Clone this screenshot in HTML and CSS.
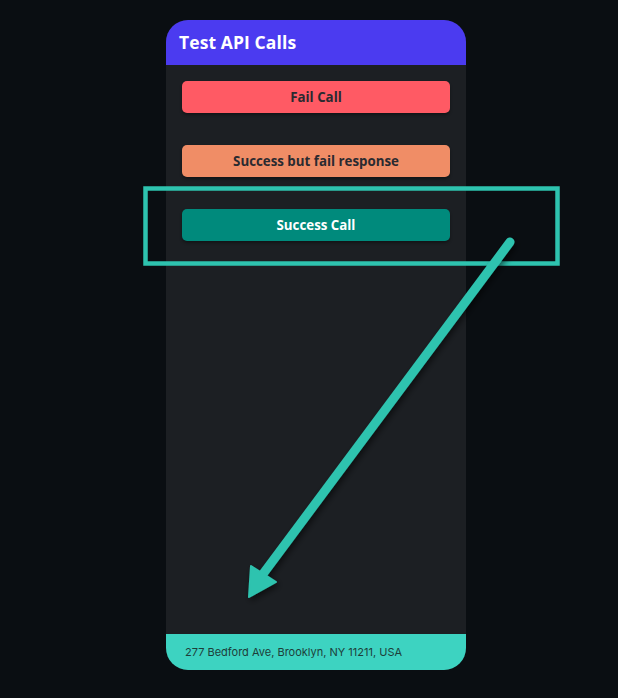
FILE: index.html
```html
<!DOCTYPE html>
<html>
<head>
<meta charset="utf-8">
<link rel="stylesheet" href="styles.css">
</head>
<body>
<div class="stage">
  <div class="phone">
    <header class="phone-header">
      <h1 class="title">Test API Calls</h1>
    </header>
    <main class="phone-body">
      <button class="btn btn-fail">Fail Call</button>
      <button class="btn btn-warn">Success but fail response</button>
      <button class="btn btn-ok">Success Call</button>
    </main>
    <footer class="phone-footer">277 Bedford Ave, Brooklyn, NY 11211, USA</footer>
  </div>
  <svg class="annotation" width="618" height="698" viewBox="0 0 618 698">
    <defs>
      <filter id="sh" x="-20%" y="-20%" width="140%" height="140%">
        <feDropShadow dx="2" dy="3" stdDeviation="3" flood-color="#000" flood-opacity="0.55"/>
      </filter>
    </defs>
    <rect x="145.5" y="188.5" width="412" height="75" fill="none" stroke="#2ec3af" stroke-width="4.5"/>
    <g filter="url(#sh)" fill="#2ec3af" stroke="#2ec3af">
      <line x1="510" y1="242" x2="260" y2="578" stroke-width="9" stroke-linecap="round"/>
      <polygon points="249,597 251,566 276,582" stroke-width="2" stroke-linejoin="round"/>
    </g>
  </svg>
</div>
</body>
</html>
```
FILE: styles.css
```css
* { box-sizing: border-box; }
html, body { margin: 0; padding: 0; }
body {
  background: #0a0e12;
  width: 618px;
  height: 698px;
  overflow: hidden;
}
.stage {
  position: relative;
  width: 618px;
  height: 698px;
  padding-top: 20px;
  display: flex;
  justify-content: flex-start;
}
.phone {
  margin-left: 166px;
  width: 300px;
  height: 650px;
  background: #1c1f23;
  border-radius: 22px;
  overflow: hidden;
  display: flex;
  flex-direction: column;
}
.phone-header {
  background: #4b3bf0;
  height: 45px;
  padding: 0 13px;
  display: flex;
  align-items: center;
}
.title {
  margin: 0;
  padding-bottom: 1px;
  color: #ffffff;
  font-family: "Open Sans", sans-serif;
  font-weight: 700;
  font-size: 17.5px;
  letter-spacing: 0.1px;
}
.phone-body {
  flex: 1;
  padding: 16px 16px 0;
  display: flex;
  flex-direction: column;
  gap: 32px;
}
.btn {
  display: block;
  width: 268px;
  height: 32px;
  border: none;
  border-radius: 5px;
  font-family: "Open Sans", sans-serif;
  font-weight: 700;
  font-size: 13.3px;
  color: #2a2a30;
  box-shadow: 0 2px 3px rgba(0,0,0,0.35);
  padding: 0;
}
.btn-fail { background: #ff5a64; }
.btn-warn { background: #f08d66; }
.btn-ok { background: #008a7c; color: #ffffff; }
.phone-footer {
  height: 36px;
  background: #3dd3c1;
  color: #1d3e3a;
  font-family: Inter, sans-serif;
  font-size: 11px;
  padding: 0 19px;
  display: flex;
  align-items: center;
}
.annotation {
  position: absolute;
  left: 0;
  top: 0;
  pointer-events: none;
}
```
